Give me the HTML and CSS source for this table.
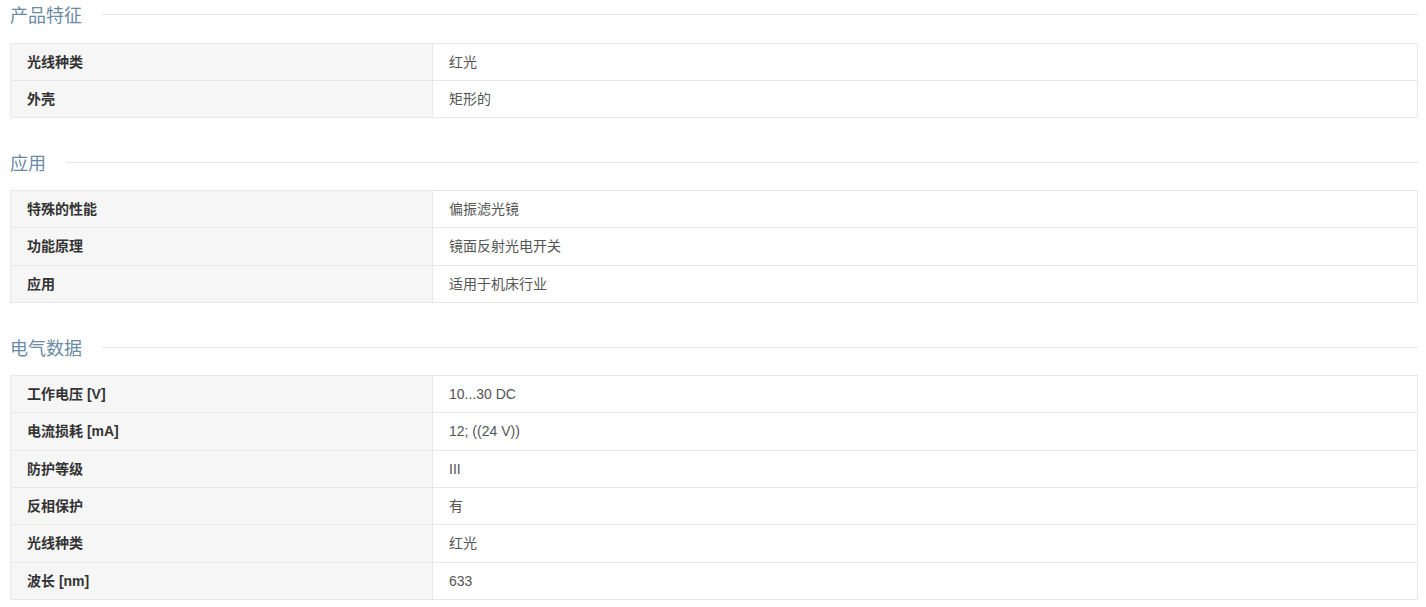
FILE: index.html
```html
<!DOCTYPE html>
<html lang="zh-CN">
<head>
<meta charset="utf-8">
<link rel="stylesheet" href="styles.css">
</head>
<body>
<div class="page">
  <section class="group">
    <div class="group-title"><span>产品特征</span><i class="rule"></i></div>
    <table class="spec">
      <tr><th>光线种类</th><td>红光</td></tr>
      <tr><th>外壳</th><td>矩形的</td></tr>
    </table>
  </section>
  <section class="group">
    <div class="group-title"><span>应用</span><i class="rule"></i></div>
    <table class="spec">
      <tr><th>特殊的性能</th><td>偏振滤光镜</td></tr>
      <tr><th>功能原理</th><td>镜面反射光电开关</td></tr>
      <tr><th>应用</th><td>适用于机床行业</td></tr>
    </table>
  </section>
  <section class="group">
    <div class="group-title"><span>电气数据</span><i class="rule"></i></div>
    <table class="spec">
      <tr><th>工作电压 [V]</th><td>10...30 DC</td></tr>
      <tr><th>电流损耗 [mA]</th><td>12; ((24 V))</td></tr>
      <tr><th>防护等级</th><td>III</td></tr>
      <tr><th>反相保护</th><td>有</td></tr>
      <tr><th>光线种类</th><td>红光</td></tr>
      <tr><th>波长 [nm]</th><td>633</td></tr>
    </table>
  </section>
</div>
</body>
</html>
```
FILE: styles.css
```css
html, body {
  margin: 0;
  padding: 0;
  background: #fff;
}
body {
  font-family: "Liberation Sans", "Noto Sans CJK SC", Arial, sans-serif;
  font-size: 14px;
  color: #555;
}
.page {
  padding: 0 8px 0 10px;
}
.group {
  margin-bottom: 29.5px;
}
.group-title {
  display: flex;
  align-items: flex-start;
  height: 28px;
  margin-bottom: 14.5px;
}
.group-title span {
  font-family: "Noto Sans CJK SC", sans-serif;
  font-size: 18px;
  line-height: 28px;
  color: #6b8ba5;
  margin-right: 20px;
  white-space: nowrap;
}
.group-title .rule {
  flex: 1;
  height: 1px;
  margin-top: 14px;
  background: #e5e5e5;
}
.spec {
  width: 100%;
  border-collapse: collapse;
  table-layout: fixed;
}
.spec th, .spec td {
  border: 1px solid #e8e8e8;
  padding: 8px 16px;
  line-height: 20.33px;
  text-align: left;
  vertical-align: middle;
}
.spec th {
  width: 389px;
  background: #f6f6f6;
  font-weight: bold;
  color: #333;
}
.spec td {
  background: #fff;
  color: #555;
}
```
